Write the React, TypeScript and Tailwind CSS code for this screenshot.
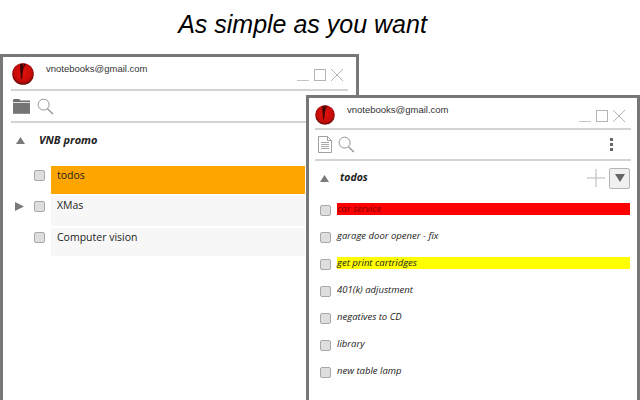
import React from "react";

const sans = "font-['Liberation_Sans',Arial,sans-serif]";
const open = "font-['Open_Sans',sans-serif]";

const Logo = ({size = 22}: {size?: number}) => (
  <svg width={size} height={size} viewBox="0 0 22 22" className="shrink-0">
    <defs>
      <radialGradient id="lg" cx="50%" cy="45%" r="55%">
        <stop offset="0%" stopColor="#e8120e" />
        <stop offset="75%" stopColor="#c40b08" />
        <stop offset="100%" stopColor="#5a0806" />
      </radialGradient>
    </defs>
    <circle cx="11" cy="11" r="10.8" fill="url(#lg)" />
    <path d="M8 .8 L14 .8 L11.5 5 L10 16 L9 16 L8.2 8 Z" fill="#400605" />
    <path d="M10.5 .6 L12 .6 L11 4 Z" fill="#c40b08" />
  </svg>
);

const WinControls = () => (
  <svg width="52" height="16" viewBox="0 0 52 16" className="shrink-0">
    <path d="M1 13.5H13" stroke="#c4c4c4" strokeWidth="1" />
    <rect x="18.5" y="2.5" width="11" height="11" fill="none" stroke="#b4b4b4" />
    <path d="M35 2L47 14M47 2L35 14" stroke="#b4b4b4" strokeWidth="1" />
  </svg>
);

const Search = () => (
  <svg width="17" height="17" viewBox="0 0 18 18" fill="none" className="shrink-0">
    <circle cx="7" cy="7" r="5.8" stroke="#8c8c8c" strokeWidth="1" />
    <path d="M11 11.2L16.8 17" stroke="#8c8c8c" strokeWidth="1.3" />
  </svg>
);

const Folder = () => (
  <svg width="17" height="16" viewBox="0 0 17 16" className="shrink-0">
    <path d="M0 2.5C0 1.5.5 1 1.5 1H6L7.5 2.5H17V4H0Z" fill="#6e6e6e" />
    <rect x="0" y="4.8" width="17" height="11" fill="#757575" />
  </svg>
);

const Doc = () => (
  <svg width="14" height="17" viewBox="0 0 14 17" fill="none" className="shrink-0">
    <path d="M.5.5H9.5L13.5 4.5V16.5H.5Z" stroke="#a0a0a0" />
    <path d="M9.5.5V4.5H13.5" stroke="#a0a0a0" />
    <path d="M3 6.5H11M3 8.5H11M3 10.5H11M3 12.5H11" stroke="#a8a8a8" />
  </svg>
);

const Up = () => (
  <svg width="9" height="7" viewBox="0 0 9 7" className="shrink-0">
    <path d="M4.5 0L9 7H0Z" fill="#7a7a7a" />
  </svg>
);

const Box = () => (
  <span className="block w-[11px] h-[11px] shrink-0 rounded-[2px] border border-[#a8a8a8] bg-[#dedede]" />
);

const folders = [
  {name: "todos", bg: "bg-[#ffa500]", h: "h-[28px]", mt: "mt-[0px]", boxTop: "pt-[4px]", arrow: false},
  {name: "XMas", bg: "bg-[#f7f7f7]", h: "h-[30px]", mt: "mt-[2px]", boxTop: "pt-[5px]", arrow: true},
  {name: "Computer vision", bg: "bg-[#f7f7f7]", h: "h-[28px]", mt: "mt-[2px]", boxTop: "pt-[4px]", arrow: false},
];

const tasks: {name: string; bg?: string; color?: string}[] = [
  {name: "car service", bg: "bg-[#ff0000]", color: "text-[#7a0000]"},
  {name: "garage door opener - fix"},
  {name: "get print cartridges", bg: "bg-[#ffff00]"},
  {name: "401(k) adjustment"},
  {name: "negatives to CD"},
  {name: "library"},
  {name: "new table lamp"},
];

export default function App() {
  return (
    <div className="relative w-[640px] h-[400px] overflow-hidden bg-white">
      <h1 className={`${sans} pt-[9px] text-center text-[25px] leading-[30px] italic font-normal text-black ml-[-35px]`}>
        As simple as you want
      </h1>

      {/* left window */}
      <div className="absolute left-0 top-[54px] w-[359px] h-[346px] border-[3px] border-b-0 border-[#777] bg-white">
        <div className="mx-[8px]">
          <div className="flex pt-[6px] pb-[4px] border-b-2 border-[#d4d4d4]">
            <div className="ml-[1px]">
              <Logo size={22} />
            </div>
            <div className={`${sans} ml-[12px] mt-[0px] text-[9.5px] leading-[12px] text-[#333]`}>vnotebooks@gmail.com</div>
            <div className="ml-auto mt-[4px]">
              <WinControls />
            </div>
          </div>
          <div className="flex items-center gap-[7px] h-[32px] pl-[2px] border-b-2 border-[#d4d4d4]">
            <Folder />
            <Search />
          </div>
        </div>
        <div className="flex items-center h-[34px] pl-[13px]">
          <Up />
          <span className={`${open} ml-[14px] text-[11px] font-bold italic text-[#222]`}>VNB promo</span>
        </div>
        <div className="mt-[9px] w-[302px]">
          {folders.map((f) => (
            <div key={f.name} className={`flex ${f.mt}`}>
              <div className="w-[31px] pt-[6px] pl-[12px]">
                {f.arrow && (
                  <svg width="9" height="9" viewBox="0 0 9 9">
                    <path d="M0 0L9 4.5L0 9Z" fill="#7a7a7a" />
                  </svg>
                )}
              </div>
              <div className={`w-[17px] ${f.boxTop}`}>
                <Box />
              </div>
              <div className={`${f.h} ${f.bg} flex-1 pl-[6px] ${open} text-[10.5px] leading-[19px] text-[#222]`}>
                {f.name}
              </div>
            </div>
          ))}
        </div>
      </div>

      {/* right window */}
      <div className="absolute left-[306px] top-[95px] w-[334px] h-[305px] border-[3px] border-b-0 border-[#777] bg-white">
        <div className="mx-[6px]">
          <div className="flex pt-[7px] pb-[3px] border-b-2 border-[#d4d4d4]">
            <Logo size={20} />
            <div className={`${sans} ml-[12px] mt-[-1px] text-[9.5px] leading-[12px] text-[#333]`}>vnotebooks@gmail.com</div>
            <div className="ml-auto mt-[3px] mr-[1px]">
              <WinControls />
            </div>
          </div>
          <div className="flex items-center gap-[6px] h-[31px] pl-[3px] border-b-2 border-[#d4d4d4]">
            <Doc />
            <Search />
            <span className="ml-auto mr-[18px] flex flex-col gap-[2px]">
              <i className="block w-[3px] h-[3px] bg-[#666]" />
              <i className="block w-[3px] h-[3px] bg-[#666]" />
              <i className="block w-[3px] h-[3px] bg-[#666]" />
            </span>
          </div>
        </div>
        <div className="flex items-center h-[34px] pl-[11px] pr-[7px]">
          <Up />
          <span className={`${open} ml-[11px] text-[10.5px] font-bold italic text-[#222]`}>todos</span>
          <svg width="18" height="18" viewBox="0 0 18 18" className="ml-auto">
            <path d="M0 9H18M9 0V18" stroke="#b4b4b4" />
          </svg>
          <span className="ml-[4px] flex items-center justify-center w-[21px] h-[21px] border border-[#b4b4b4] rounded-[2px] bg-[#f0f0f0]">
            <svg width="10" height="8" viewBox="0 0 10 8">
              <path d="M0 0H10L5 8Z" fill="#666" />
            </svg>
          </span>
        </div>
        <div className="mt-[8px]">
          {tasks.map((t) => (
            <div key={t.name} className="flex h-[27px]">
              <div className="w-[28px] pl-[11px] pt-[2px]">
                <Box />
              </div>
              <div
                className={`w-[293px] h-[12px] ${t.bg ?? ""} ${open} text-[9.5px] leading-[12px] italic ${t.color ?? "text-[#222]"}`}
              >
                {t.name}
              </div>
            </div>
          ))}
        </div>
      </div>
    </div>
  );
}
